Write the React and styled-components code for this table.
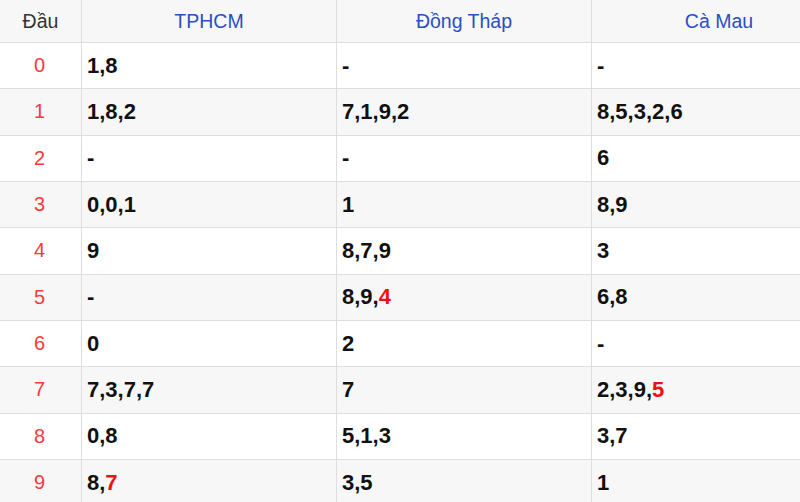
import React from 'react';
import styled, { createGlobalStyle } from 'styled-components';

const GlobalStyle = createGlobalStyle`
  html, body {
    margin: 0;
    padding: 0;
    background: #fff;
  }
  body {
    font-family: "Liberation Sans", Arial, sans-serif;
  }
`;

// the table is wider than the viewport; the last column gets cut off
const Frame = styled.div`
  width: 800px;
  height: 502px;
  overflow: hidden;
`;

const Table = styled.div`
  width: 846px;
  display: flex;
  flex-direction: column;
`;

const Row = styled.div`
  display: grid;
  grid-template-columns: 81px 254px 254px 254px;
  column-gap: 1px;
  background: #dedede;
  border-bottom: 1px solid #dedede;
  height: ${props => (props.header ? '42px' : '45.33px')};
  & > * {
    background: ${props => (props.shaded ? '#f7f7f7' : '#fff')};
  }
`;

const HeadCell = styled.div`
  display: flex;
  align-items: center;
  justify-content: center;
  font-size: 19.5px;
  color: ${props => (props.plain ? '#333' : '#2b4fc4')};
`;

const IndexCell = styled.div`
  display: flex;
  align-items: center;
  justify-content: center;
  padding-right: 2px;
  font-size: 20px;
  color: #f53b3b;
`;

const Cell = styled.div`
  display: flex;
  align-items: center;
  padding-left: 5px;
  font-size: 22px;
  font-weight: bold;
  color: #111;
`;

const Hit = styled.span`
  color: #ee1111;
`;

const provinces = ['TPHCM', 'Đồng Tháp', 'Cà Mau'];

// last digit in a cell can be highlighted red, marked with *
const rows = [
  ['1,8', '-', '-'],
  ['1,8,2', '7,1,9,2', '8,5,3,2,6'],
  ['-', '-', '6'],
  ['0,0,1', '1', '8,9'],
  ['9', '8,7,9', '3'],
  ['-', '8,9,*4', '6,8'],
  ['0', '2', '-'],
  ['7,3,7,7', '7', '2,3,9,*5'],
  ['0,8', '5,1,3', '3,7'],
  ['8,*7', '3,5', '1']
];

const renderValue = value => {
  const idx = value.indexOf('*');
  if (idx === -1) return value;
  return (
    <>
      {value.slice(0, idx)}
      <Hit>{value.slice(idx + 1)}</Hit>
    </>
  );
};

export default function App() {
  return (
    <Frame>
      <GlobalStyle />
      <Table>
        <Row header shaded>
          <HeadCell plain>Đầu</HeadCell>
          {provinces.map(name => (
            <HeadCell key={name}>{name}</HeadCell>
          ))}
        </Row>
        {rows.map((values, i) => (
          <Row key={i} shaded={i % 2 === 1}>
            <IndexCell>{i}</IndexCell>
            {values.map((v, j) => (
              <Cell key={j}>{renderValue(v)}</Cell>
            ))}
          </Row>
        ))}
      </Table>
    </Frame>
  );
}
